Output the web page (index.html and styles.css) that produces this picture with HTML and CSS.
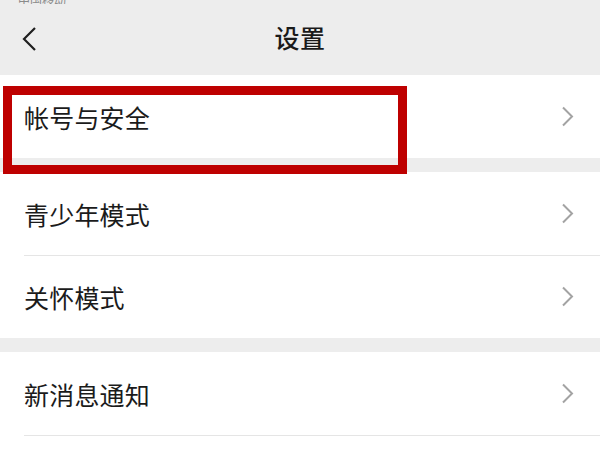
FILE: index.html
```html
<!DOCTYPE html>
<html lang="zh">
<head>
<meta charset="utf-8">
<link rel="stylesheet" href="styles.css">
</head>
<body>
<div class="screen">
  <header class="header">
    <div class="status"><span>中国移动</span></div>
    <div class="navbar">
      <svg class="back" width="18" height="26" viewBox="0 0 18 26"><polyline points="15,2 4,13 15,24" fill="none" stroke="#1f1f1f" stroke-width="2.2"/></svg>
      <div class="title">设置</div>
    </div>
  </header>
  <section class="group">
    <div class="row highlighted">
      <span class="label">帐号与安全</span>
      <svg class="chev" width="13" height="21" viewBox="0 0 13 21"><polyline points="2,1.5 11,10.5 2,19.5" fill="none" stroke="#a3a3a3" stroke-width="2"/></svg>
      <div class="mark"></div>
    </div>
  </section>
  <div class="gap"></div>
  <section class="group">
    <div class="row">
      <span class="label">青少年模式</span>
      <svg class="chev" width="13" height="21" viewBox="0 0 13 21"><polyline points="2,1.5 11,10.5 2,19.5" fill="none" stroke="#a3a3a3" stroke-width="2"/></svg>
    </div>
    <div class="row">
      <span class="label">关怀模式</span>
      <svg class="chev" width="13" height="21" viewBox="0 0 13 21"><polyline points="2,1.5 11,10.5 2,19.5" fill="none" stroke="#a3a3a3" stroke-width="2"/></svg>
    </div>
  </section>
  <div class="gap"></div>
  <section class="group">
    <div class="row">
      <span class="label">新消息通知</span>
      <svg class="chev" width="13" height="21" viewBox="0 0 13 21"><polyline points="2,1.5 11,10.5 2,19.5" fill="none" stroke="#a3a3a3" stroke-width="2"/></svg>
    </div>
    <div class="row last"></div>
  </section>
</div>
</body>
</html>
```
FILE: styles.css
```css
* { box-sizing: border-box; }
html, body { margin: 0; padding: 0; }
body {
  width: 600px;
  height: 449px;
  overflow: hidden;
  background: #ffffff;
  font-family: "Noto Sans CJK SC", "Noto Sans", sans-serif;
  color: #1b1b1b;
}
.screen { width: 600px; height: 449px; overflow: hidden; }
.header {
  background: #ededed;
  height: 75px;
  display: flex;
  flex-direction: column;
}
.status {
  height: 4px;
  overflow: hidden;
  display: flex;
  align-items: flex-end;
  padding-left: 18px;
  font-size: 12px;
  color: #8a8a8a;
}
.status span { line-height: 12px; margin-bottom: -2px; }
.navbar {
  position: relative;
  height: 71px;
  display: flex;
  align-items: center;
  justify-content: center;
}
.back {
  position: absolute;
  left: 20px;
  top: 22px;
}
.title {
  font-size: 25px;
  font-weight: 500;
  color: #1a1a1a;
  margin-top: -5px;
  letter-spacing: 0.5px;
}
.group { background: #ffffff; }
.gap { height: 14px; background: #ededed; }
.row {
  position: relative;
  height: 83px;
  display: flex;
  align-items: center;
  justify-content: space-between;
  padding: 0 26px 0 24px;
}
.row.last { height: 14px; }
.row + .row::before {
  content: "";
  position: absolute;
  left: 24px;
  right: 0;
  top: 0;
  height: 1px;
  background: #e5e5e5;
}
.label {
  font-size: 25px;
  color: #1b1b1b;
  letter-spacing: 0.2px;
}
.chev { display: block; }
.mark {
  position: absolute;
  left: 3px;
  top: 11px;
  width: 404px;
  height: 88px;
  border: 9px solid #be0000;
  pointer-events: none;
  z-index: 2;
}
```
